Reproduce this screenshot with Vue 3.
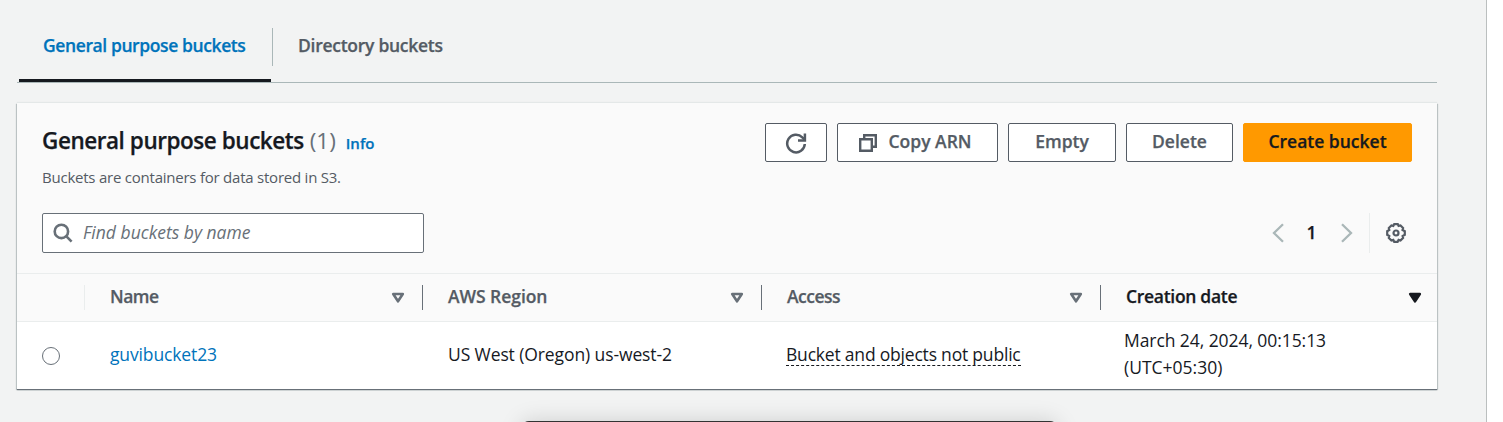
<script setup>
const columns = [
  { key: 'name', label: 'Name' },
  { key: 'region', label: 'AWS Region' },
  { key: 'access', label: 'Access' },
  { key: 'created', label: 'Creation date', sorted: true },
]
</script>

<template>
  <div class="page">
    <nav class="tabs">
      <a class="tab active"><span class="t-tab">General purpose buckets</span></a>
      <i class="tab-divider"></i>
      <a class="tab"><span class="t-directory">Directory buckets</span></a>
    </nav>

    <section class="card">
      <header class="head">
        <div class="title-row">
          <div class="titles">
            <h2><span class="t-title">General purpose buckets</span> <span class="count">(1)</span><a class="info">Info</a></h2>
            <p>Buckets are containers for data stored in S3.</p>
          </div>
          <div class="actions">
            <button class="refresh" aria-label="Refresh">
              <svg width="22" height="22" viewBox="0 0 22 22"><path d="M19.800 12A8.800 8.800 0 1 1 17.300 5.400L19.500 7.500" /><path d="M19.900 1.500v6.900H13" /></svg>
            </button>
            <button class="copy">
              <svg width="18" height="18" viewBox="0 0 18 18"><path d="M1.200 5.200h11.600v11.600H1.200z" /><path d="M5.200 5V1.200h11.600v11.600H13" /></svg>
              <span>Copy ARN</span>
            </button>
            <button class="empty"><span>Empty</span></button>
            <button class="delete"><span>Delete</span></button>
            <button class="create"><span>Create bucket</span></button>
          </div>
        </div>
        <div class="tools">
          <div class="search">
            <svg width="20" height="20" viewBox="0 0 20 20"><circle cx="8.400" cy="8.400" r="6.700" /><path d="M13.200 13.200l5.400 5.400" /></svg>
            <span>Find buckets by name</span>
          </div>
          <div class="pager">
            <svg width="12" height="20" viewBox="0 0 12 20"><path d="M11 1.200L2 10l9 8.800" /></svg>
            <b>1</b>
            <svg width="12" height="20" viewBox="0 0 12 20"><path d="M1 1.200L10 10l-9 8.800" /></svg>
            <i></i>
            <svg class="gear" width="20" height="20" viewBox="0 0 20 20">
              <path d="M8.200 1.200h3.600l.8 1.700 1.900-.5 2.600 2.600-.6 1.900 2.300 1.300v3.600l-2.200 1.200.5 1.900-2.600 2.600-1.900-.6-1 1.900H8.200l-.9-1.900-1.900.6-2.600-2.600.5-1.900-2.100-1.200V8.200l2.100-1.300-.5-1.900 2.600-2.600 1.900.5z" />
              <circle cx="10" cy="10" r="2.500" />
            </svg>
          </div>
        </div>
      </header>

      <div class="grid thead">
        <div class="pick"></div>
        <div v-for="c in columns" :key="c.key" class="th" :class="[c.key, { sorted: c.sorted }]">
          <span>{{ c.label }}</span>
          <svg width="14" height="12" viewBox="0 0 14 12"><path d="M2.200 2h9.600L7 9.300z" /></svg>
        </div>
      </div>

      <div class="grid row">
        <div class="pick"><i class="radio"></i></div>
        <div class="td"><a class="bucket">guvibucket23</a></div>
        <div class="td"><span class="t-region">US West (Oregon) us-west-2</span></div>
        <div class="td access-cell"><span class="access-text">Bucket and objects not public</span></div>
        <div class="td date"><span class="t-date">March 24, 2024, 00:15:13</span><span class="t-utc">(UTC+05:30)</span></div>
      </div>
    </section>
    <div class="overlay"></div>
  </div>
</template>

<style>
body { background: #fff; }
</style>

<style scoped>
* { box-sizing: border-box; }
.page {
  position: relative; width: 1487px; height: 422px; padding: 10px 49px 0 17px; overflow: hidden;
  background: #f2f3f3; border-right: 1px solid #bbbfbf; color: #16191f;
  font: 17.5px/27.5px "Open Sans", "Noto Sans", sans-serif; font-stretch: 88%;
}
span, a, b, p { white-space: nowrap; }
svg { fill: none; stroke: #545b64; flex: none; }
.tab, .t-title, .info, button, .th, b { -webkit-text-stroke: .25px currentColor; }
.tabs { display: flex; height: 73px; border-bottom: 1px solid #aab7b8; padding-left: 2px; }
.tab { height: 72px; padding: 22px 25px 0 24px; color: #545b64; font-weight: 600; }
.tab.active { width: 252px; color: #0073bb; border-bottom: 3px solid #16191f; padding-right: 0; }
.t-tab { letter-spacing: -.4px; }
.t-directory { letter-spacing: -.27px; }
.tab-divider { width: 1px; height: 38px; margin: 18px 1px 0; background: #aab7b8; }
.card { margin-top: 20px; width: 1420px; background: #fff; box-shadow: 0 -1px 1px #e4e8e8, 0 1px 1px #687078, 1px 1px 1px #c3caca, -1px 1px 1px #c3caca; }
.head { height: 171px; background: #fafafa; border-bottom: 1px solid #eaeded; padding: 20px 25px 0; }
.title-row { display: flex; justify-content: space-between; height: 90px; }
h2 { margin: 0; font-size: 22.5px; line-height: 35px; font-weight: 600; }
.t-title { letter-spacing: -.45px; }
.count { font-weight: 400; color: #687078; }
.info { margin-left: 10px; font-size: 15px; color: #0073bb; }
p { margin: 3px 0 0; font-size: 15px; line-height: 27px; letter-spacing: -.23px; color: #545b64; }
.actions { display: flex; gap: 10px; }
button { display: flex; align-items: center; justify-content: center; height: 39px; padding: 0 0 1px; background: #fff; border: 1px solid #545b64; border-radius: 2px; color: #545b64; font: inherit; font-weight: 600; }
.refresh { width: 62px; padding: 0; }
.refresh svg { stroke-width: 2.500; }
.copy { width: 161px; gap: 11px; padding-right: 4px; }
.copy svg { stroke-width: 2.400; margin-top: 2px; }
.empty { width: 108px; }
.delete { width: 107px; }
.create { width: 169px; background: #ff9900; border-color: #ff9900; color: #16191f; }
.tools { display: flex; justify-content: space-between; }
.search { display: flex; align-items: center; width: 382px; height: 40px; padding-left: 10px; gap: 10px; background: #fff; border: 1px solid #687078; border-radius: 2px; color: #687078; font-style: italic; }
.search svg { stroke: #687078; stroke-width: 2.600; }
.pager { display: flex; align-items: center; height: 40px; padding-right: 6px; }
.pager svg { stroke: #aab7b8; stroke-width: 2.300; }
.pager b { width: 57px; padding: 0 2px 1px 0; text-align: center; font-weight: 600; }
.pager i { width: 1px; height: 40px; margin: 0 16px; background: #eaeded; }
.pager .gear { stroke: #545b64; stroke-width: 2.200; }
.grid { display: grid; grid-template-columns: 67px 338px 339px 339px 337px; }
.thead { height: 48px; background: #fafafa; border-bottom: 1px solid #eaeded; }
.th { display: flex; align-items: center; justify-content: space-between; height: 25px; margin-top: 11px; padding: 0 17px 0 25px; border-left: 1px solid #687078; color: #545b64; font-weight: 600; }
.th.name { border-color: #eaeded; letter-spacing: -.5px; }
.th.region { letter-spacing: -.05px; }
.th.access { letter-spacing: -.5px; }
.th.created { letter-spacing: -.3px; }
.th span { margin-top: -2px; }
.th svg { stroke: #687078; stroke-width: 2.600; stroke-linejoin: round; }
.th.sorted { color: #16191f; padding-right: 15px; }
.th.sorted svg { fill: #16191f; stroke: #16191f; }
.row { height: 67px; align-items: center; }
.pick { padding-left: 25px; }
.radio { display: block; width: 18px; height: 18px; border: 1px solid #687078; border-radius: 50%; }
.td { padding: 0 0 2px 26px; }
.bucket { color: #0073bb; letter-spacing: -.13px; }
.t-region { letter-spacing: -.1px; }
.access-cell { padding-left: 25px; }
.access-text { display: inline-block; height: 25px; border-bottom: 1px dashed #16191f; letter-spacing: -.2px; }
.date { display: flex; flex-direction: column; align-items: flex-start; padding: 0 0 3px 24px; line-height: 27px; }
.t-date { letter-spacing: -.07px; }
.overlay { position: absolute; left: 521px; top: 421px; width: 537px; height: 40px; border-radius: 8px; background: #333; box-shadow: 0 0 22px rgba(0, 0, 0, .15); }
</style>
